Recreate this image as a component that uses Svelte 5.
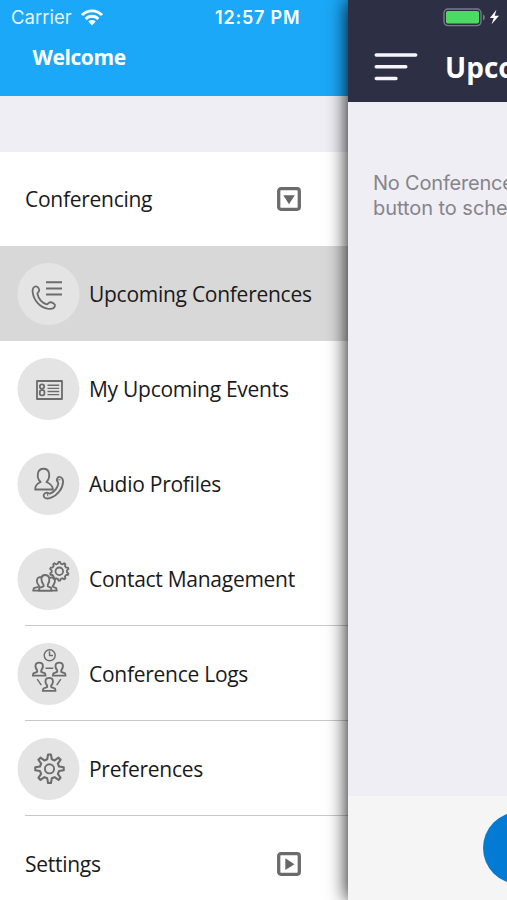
<script>
  const items = [
    { label: 'Upcoming Conferences', icon: 'call', active: true },
    { label: 'My Upcoming Events', icon: 'card' },
    { label: 'Audio Profiles', icon: 'audio' },
    { label: 'Contact Management', icon: 'contact', line: true },
    { label: 'Conference Logs', icon: 'logs', line: true },
    { label: 'Preferences', icon: 'gear', line: true }
  ];

  // Closed gear outline with rounded teeth.
  function gear(cx, cy, outer, inner, teeth) {
    const step = (Math.PI * 2) / teeth;
    const pts = [];
    for (let i = 0; i < teeth; i++) {
      const a = i * step - Math.PI / 2;
      for (const [r, o] of [[inner, -0.3], [outer, -0.13], [outer, 0.13], [inner, 0.3]]) {
        const t = a + o * step;
        pts.push((cx + r * Math.cos(t)).toFixed(2) + ' ' + (cy + r * Math.sin(t)).toFixed(2));
      }
    }
    return 'M' + pts.join('L') + 'Z';
  }
</script>

{#snippet person(x, y)}
  <path
    transform="translate({x} {y})"
    d="M-2 2.2C-3.6.6-4-1.2-3.6-3.2-3-6.2 3-6.2 3.6-3.2 4-1.2 3.6.6 2 2.2V3.8L5.8 5.2 6.4 7.6H-6.4L-5.8 5.2-2 3.8Z"
  />
{/snippet}

<div class="app">
  <aside class="drawer">
    <header class="welcome">
      <div class="status">
        <span class="carrier">Carrier</span>
        <svg class="wifi" width="22" height="17" viewBox="0 0 22 17">
          <g fill="none" stroke="#fff" stroke-width="2.8">
            <path d="M1 6.1C6.5.4 15.5.4 21 6.1" />
            <path d="M4.7 10C8.2 6.3 13.8 6.3 17.3 10" />
          </g>
          <path d="M7.3 12.4C9.4 10.4 12.6 10.4 14.7 12.4L11 16.4Z" fill="#fff" />
        </svg>
        <span class="time">12:57 PM</span>
      </div>
      <h1>Welcome</h1>
    </header>
    <div class="spacer"></div>
    <div class="group first">
      <span>Conferencing</span>
      <svg width="24" height="24" viewBox="0 0 24 24">
        <rect x="1.7" y="1.7" width="20.6" height="20.6" rx="2.2" fill="none" stroke="#6b6b6b" stroke-width="3.3" />
        <path d="M6.3 8.2H17.8L12 17.2Z" fill="#666" />
      </svg>
    </div>
    {#each items as item}
      <div class="item" class:active={item.active} class:line={item.line}>
        <svg class="icon" width="63" height="62" viewBox="7 7.7 63 62">
          <circle class="disc" cx="38.5" cy="38.7" r="31" />
          {#if item.icon === 'call'}
            <path stroke-width="2" d="M36 27H52M36 33.2H52M36 39.3H52" />
            <path d="M25.8 31C23.4 31.2 22.2 33.5 22.7 37 23.8 45 29.5 51.5 37.5 53.3 41 54 44.2 53.2 45 50.7 45.6 48.7 41.8 46.6 39.7 47 38.4 47.3 38 49 36.8 49 32 47.7 28.5 43.3 27.4 38.5 27.3 37.4 29.2 36.8 29.2 35.2 29.2 33 27.5 30.9 25.8 31Z" />
          {:else if item.icon === 'card'}
            <rect x="27" y="30.7" width="25" height="18" stroke-width="1.8" />
            <circle cx="32" cy="36.3" r="2.2" />
            <rect x="29.8" y="39.8" width="4.6" height="5.2" rx="1.8" />
            <path stroke-width="1.4" d="M37.5 35H49.2M37.5 38.1H49.2M37.5 41.2H49.2M37.5 44.3H49.2" />
          {:else if item.icon === 'audio'}
            <path d="M43 44.2H25.2C25 40.3 27 38.2 30.7 36.7 28.2 34.5 27.3 31 28 27.8 29.3 22 37.8 22 39 27.8 39.7 31 38.8 34.2 36.4 36.7 40 38.2 42.6 40.3 43 44.2Z" />
            <path fill="#e4e4e4" d="M50.2 31.7C48.3 30.9 46.8 33 46.8 34.8 46.8 36.4 48.5 36.7 48.3 38.2 47.6 42.4 44.4 46.5 40 48.3 38.8 48.6 38.3 47 36.7 47.3 34.5 47.6 33.3 49.5 33.7 51 34.4 53.5 37.6 53.6 40.5 52.6 47.8 50 52.9 43 53.1 36.3 53.1 33.8 52 32.3 50.2 31.7Z" />
            <path stroke-width="1" d="M46.9 34.8 50.4 34.4M36.8 47.2 38 51" />
          {:else if item.icon === 'contact'}
            <path d={gear(49.3, 31, 9.4, 7.7, 10)} />
            <circle cx="49.3" cy="31" r="3.8" />
            <path d="M29.8 46.2C27.5 43.8 26.2 41 27.3 38.7 28.2 36.7 31 36.4 32.2 37.5M39.8 37.6C42 36.4 44.1 37.2 44.7 38.7 45.5 41.2 44.6 43.5 42.4 46.2L46.2 47.8 46.8 50.4H23.2L23.8 47.8 29.8 46.2" />
            <path fill="#e4e4e4" d="M33.6 44.7C30.4 40.2 30.5 34.7 35 34.7 40.1 34.7 40.4 40.2 37.7 44.7V46L41 47.6 41.6 50.4H28.8L29.4 47.6 33.6 46Z" />
          {:else if item.icon === 'logs'}
            <circle cx="39.7" cy="20" r="5.5" stroke-width="1.4" />
            <path stroke-width="1.4" d="M39.5 16V20.2H43M35.5 33H43.3M27.2 43.8 31.3 49.8M50.8 43.8 46.7 49.8" />
            {@render person(29.2, 32.8)}
            {@render person(49.2, 32.8)}
            {@render person(39.2, 48)}
          {:else}
            <path stroke-width="2.1" d={gear(39.5, 38.5, 14.3, 9.8, 8)} />
            <circle cx="39.5" cy="38.5" r="4.6" stroke-width="1.9" />
          {/if}
        </svg>
        <span>{item.label}</span>
      </div>
    {/each}
    <div class="group">
      <span>Settings</span>
      <svg width="24" height="24" viewBox="0 0 24 24">
        <rect x="1.7" y="1.7" width="20.6" height="20.6" rx="2.2" fill="none" stroke="#6b6b6b" stroke-width="3.3" />
        <path d="M8.3 6.3V18L17.5 12.2Z" fill="#666" />
      </svg>
    </div>
  </aside>

  <main class="page">
    <div class="clip">
      <header class="bar">
        <div class="power">
          <svg width="60" height="20" viewBox="0 0 60 20">
            <rect x="1" y="1" width="37" height="16.6" rx="4" fill="none" stroke="#777b87" stroke-width="1.4" />
            <rect x="3" y="3" width="33" height="12.6" rx="1.8" fill="#4cd964" />
            <path d="M40 6.5C42.4 7.2 42.4 11.6 40 12.3Z" fill="#777b87" />
            <path d="M53.4 1.8 46.9 10H50.7L48.6 16.2 56 7.8H51.7Z" fill="#fff" />
          </svg>
        </div>
        <div class="title">
          <svg width="44" height="30" viewBox="0 0 44 30">
            <path d="M2.2 3H41.7M2.2 14.7H31.8M2.2 26.5H22" stroke="#f6f6fa" stroke-width="3.4" stroke-linecap="round" />
          </svg>
          <h2>Upcoming</h2>
        </div>
      </header>
      <section class="body">
        <p><span class="tight">No Conferences</span><br />button to schedule</p>
      </section>
      <footer><span class="fab"></span></footer>
    </div>
  </main>
</div>

<style>
  :global(body) { margin: 0; overflow: hidden; }
  .app { display: flex; width: 507px; height: 900px; overflow: hidden; background: #fff; font-family: 'Open Sans', 'Noto Sans', sans-serif; }
  .drawer { width: 348px; flex: none; display: flex; flex-direction: column; background: #fff; }
  .welcome { height: 96px; flex: none; background: #1ba8f8; color: #fff; }
  .status { display: flex; align-items: center; height: 34px; padding-left: 11px; font-family: Inter, sans-serif; }
  .carrier { width: 70px; font-size: 18.5px; color: #e3f5ff; }
  .wifi { flex: none; }
  .time { margin-left: 112px; font-size: 18px; font-weight: 600; letter-spacing: .8px; white-space: nowrap; }
  h1 { margin: 8px 0 0 32.5px; font-size: 21px; line-height: 30px; font-weight: 700; letter-spacing: -.4px; }
  .spacer { height: 55.5px; flex: none; background: #efeef4; }
  .group, .item { display: flex; align-items: center; height: 95px; flex: none; box-sizing: border-box; font-size: 21px; letter-spacing: -.27px; color: #1a1a1a; white-space: nowrap; }
  .group { justify-content: space-between; padding: 0 47px 0 25px; }
  .group.first { height: 94.2px; }
  .group svg { flex: none; }
  .item { position: relative; padding-left: 17px; }
  .item span { margin-left: 9px; }
  .item.active { height: 95.8px; background: #d8d8d8; }
  .line::after { content: ''; position: absolute; left: 25px; right: 0; bottom: 0; height: 1.5px; background: #c8c8c8; }
  .icon { flex: none; fill: none; stroke: #6c6c6c; stroke-width: 1.8; stroke-linejoin: round; }
  .disc { fill: #e4e4e4; stroke: none; }
  .page { position: relative; z-index: 1; width: 159px; height: 900px; flex: none; box-shadow: 0 0 19px rgba(0, 0, 0, .98); }
  .clip { display: flex; flex-direction: column; height: 100%; overflow: hidden; background: #efeef4; }
  .bar { height: 102px; flex: none; background: #2d3045; color: #fff; }
  .power { display: flex; height: 34px; padding: 8px 0 0 95px; box-sizing: border-box; }
  .power svg, .title svg { flex: none; }
  .title { display: flex; align-items: center; height: 66px; padding-left: 26px; }
  .title h2 { margin: 0 0 0 27px; font-size: 28px; font-weight: 700; line-height: 40px; }
  .body { flex: 1; }
  .body p { margin: 69px 0 0 25px; font: 20px/25px Inter, sans-serif; letter-spacing: -.05px; color: #858489; white-space: nowrap; }
  .tight { letter-spacing: -.2px; }
  footer { height: 104px; flex: none; background: #f5f5f5; }
  .fab { display: block; width: 72px; height: 72px; margin: 16px 0 0 135px; border-radius: 50%; background: #037bd4; }
</style>
